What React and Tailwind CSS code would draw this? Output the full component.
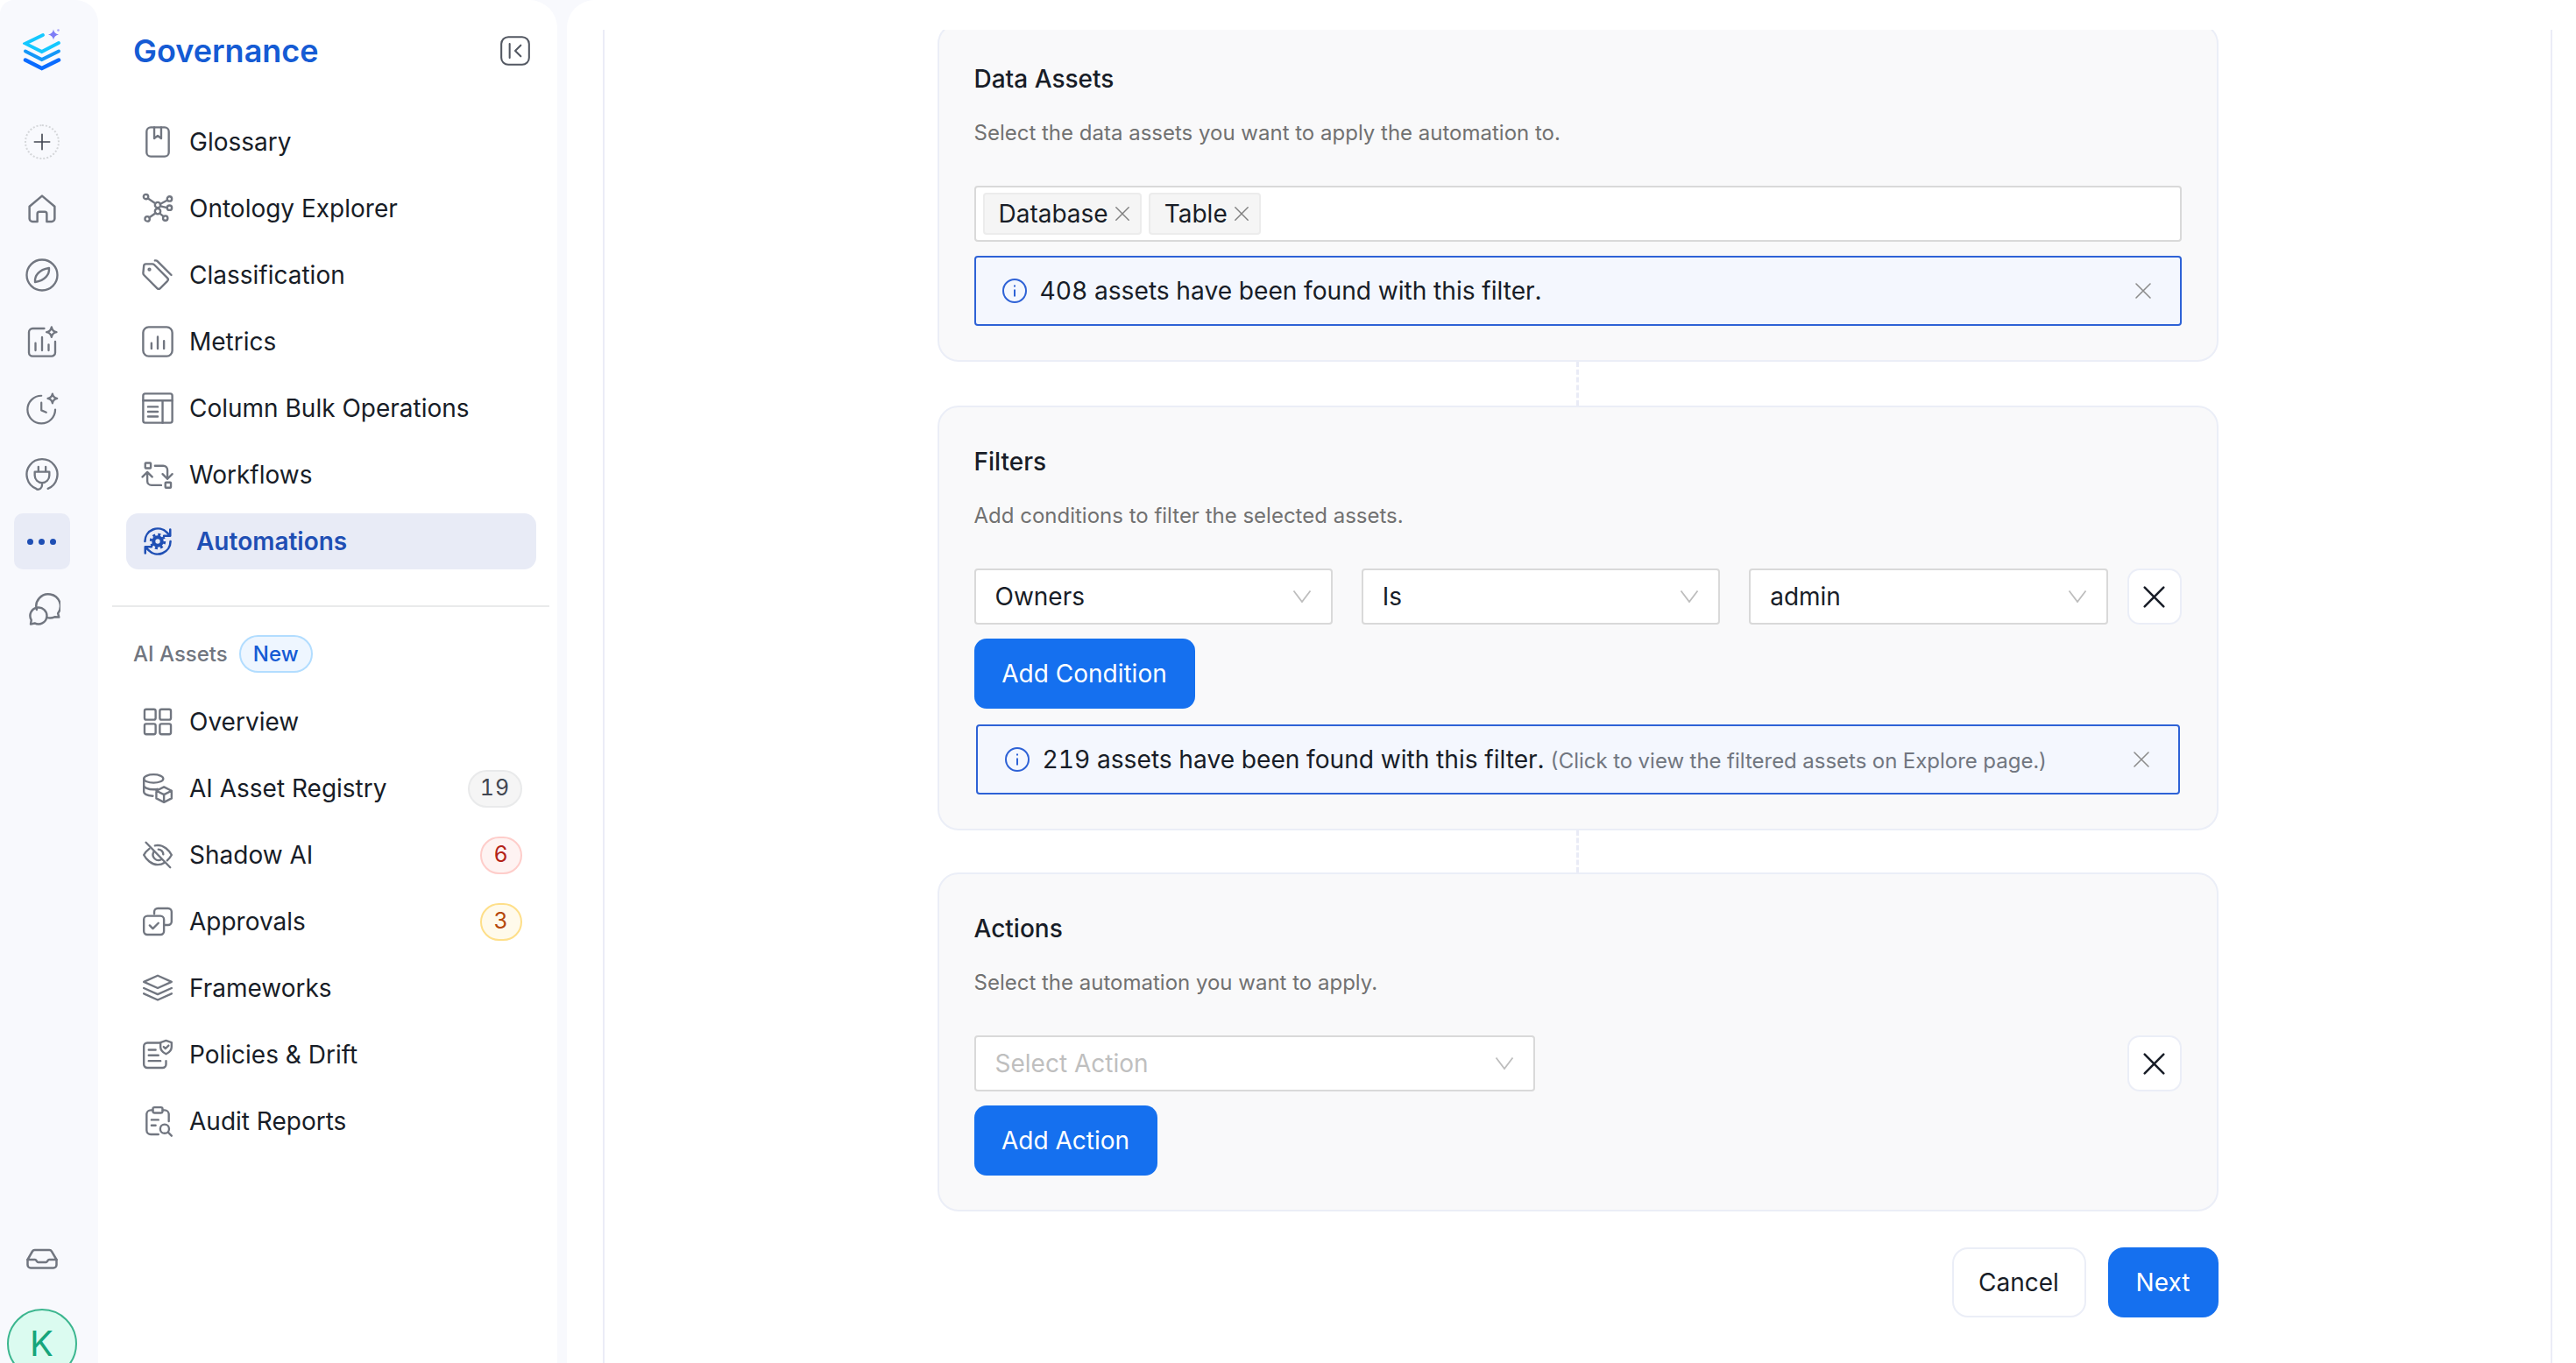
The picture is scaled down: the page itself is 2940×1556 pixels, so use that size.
import React from "react";

const Ico = ({ size = 36, color = "#717680", sw = 1.5, children, className = "" }) => (
  <svg width={size} height={size} viewBox="0 0 24 24" fill="none" stroke={color} strokeWidth={sw} strokeLinecap="round" strokeLinejoin="round" className={`shrink-0 ${className}`}>
    {children}
  </svg>
);

const Sparkle = ({ x, y, r = 3.4 }) => (
  <path d={`M${x} ${y - r}q.5 ${r - .5} ${r} ${r}q-${r - .5} .5 -${r} ${r}q-.5 -${r - .5} -${r} -${r}q${r - .5} -.5 ${r} -${r}z`} />
);

const railIcons = [
  <Ico key="h" size={46} sw={1.300}><path d="M4.500 10.800 12 4.500l7.500 6.300V18a1.800 1.800 0 0 1-1.800 1.800h-2.900v-4.600a1.200 1.200 0 0 0-1.200-1.200h-3.200a1.200 1.200 0 0 0-1.200 1.200v4.600H6.300A1.800 1.800 0 0 1 4.500 18Z" /></Ico>,
  <Ico key="c" size={40} sw={1.400}><circle cx="12" cy="12" r="10.500" /><path d="M16.800 7.200c.4 4.200-2.400 8.400-9.600 9.600-.4-4.200 2.400-8.400 9.600-9.600Z" /></Ico>,
  <Ico key="m" size={40} sw={1.400}><path d="M13.500 3H5.500A2.500 2.500 0 0 0 3 5.500v14A2.500 2.500 0 0 0 5.500 22h13a2.500 2.500 0 0 0 2.500-2.500V12" /><path d="M7.500 18v-5M12 18V9M16.500 18v-4" /><Sparkle x={18.500} y={5.500} /></Ico>,
  <Ico key="t" size={38} sw={1.400}><path d="M21.500 13a10 10 0 1 1-10-10" /><path d="M11.500 8v5.500l3.500 1.500" /><Sparkle x={19.500} y={5} /></Ico>,
  <Ico key="p" size={40} sw={1.400}><path d="M8 21.500a10.500 10.500 0 1 1 8 0" /><path d="M9.500 6.500v3.500M14.500 6.500v3.500M7 10h10v2.500a5 5 0 0 1-10 0ZM12 17.500v1.500a3 3 0 0 1-3.500 3" /></Ico>,
];

const sideIcons = {
  glossary: <><rect x="4" y="1.500" width="16" height="21" rx="3" /><path d="M9.500 1.500v8l2.500-2 2.500 2v-8" /></>,
  ontology: <><circle cx="3.500" cy="3.500" r="1.700" /><circle cx="20.500" cy="5" r="1.700" /><circle cx="20.500" cy="11.500" r="1.700" /><circle cx="4.500" cy="19.500" r="1.700" /><circle cx="17.500" cy="19" r="1.700" /><circle cx="12" cy="9.500" r="2" /><circle cx="12" cy="14" r="2" /><path d="M5 4.800 10.300 8.300M19 6 13.700 8.800M18.800 11.500 14 10.300M6 18.500 10.500 15.300M16.200 17.800 13.500 15.500" /></>,
  classification: <><path d="M2 5.500A1.500 1.500 0 0 1 3.500 4h4.600a2 2 0 0 1 1.400.6l9.500 9.500a1.600 1.600 0 0 1 0 2.200l-5.200 5.200a1.600 1.600 0 0 1-2.200 0l-9.500-9.500a2 2 0 0 1-.600-1.400Z" /><path d="M10 1.500h.5a2 2 0 0 1 1.400.6L21.800 12" /><circle cx="6" cy="8" r=".6" /></>,
  metrics: <><rect x="1.500" y="1.500" width="21" height="21" rx="4" /><path d="M7.500 17v-4M12 17V8.500M16.500 17v-5.500" /></>,
  column: <><rect x="1.500" y="1.500" width="21" height="21" rx="1.500" /><path d="M1.500 6.500h21M15.500 6.500v16M5 11h7M5 14.500h7M5 18h7" /></>,
  workflows: <><rect x="3" y="3.500" width="4" height="3.800" rx=".5" /><path d="M10 5.500h6a3 3 0 0 1 3 3v6.500M15.500 11.500l3.500 3.500 3.500-3.500" /><rect x="17.500" y="17.500" width="4" height="3.800" rx=".5" /><path d="M14.500 19.500h-7a3 3 0 0 1-3-3V10M1 13.500 4.500 10 8 13.500" /></>,
  overview: <><rect x="2.500" y="3" width="8" height="7.500" rx="1.200" /><rect x="13.500" y="3" width="8" height="7.500" rx="1.200" /><rect x="2.500" y="13.500" width="8" height="7.500" rx="1.200" /><rect x="13.500" y="13.500" width="8" height="7.500" rx="1.200" /></>,
  registry: <><ellipse cx="9" cy="5" rx="7" ry="3" /><path d="M2 5v9.500c0 1.500 2.700 2.700 6.500 3M2 9.800c0 1.600 3 3 7 3 1 0 2-.1 2.800-.3" /><path d="m16.500 11 5.500 2.700v5.500L16.500 22 11 19.200v-5.500ZM11 13.700l5.500 2.800 5.500-2.800M16.500 16.500V22" /></>,
  shadow: <><path d="M3.500 3 21 21" /><path d="M6 7.500C4 9 2.700 10.700 2 12c1.700 3.200 5.500 7 10 7 1.800 0 3.500-.5 5-1.500M10 5.300A10 10 0 0 1 12 5c4.500 0 8.300 3.800 10 7-.7 1.300-1.800 2.700-3.200 4" /><path d="M9 10a4 4 0 0 0 5.500 5.300M12.500 8a4 4 0 0 1 3.500 3.600" /></>,
  approvals: <><path d="M9.500 6.500V5a2.500 2.500 0 0 1 2.500-2.500h7.500A2.500 2.500 0 0 1 22 5v7a2.500 2.500 0 0 1-2.500 2.500h-3" /><rect x="2" y="8" width="14.500" height="13.500" rx="2.500" /><path d="m6.200 14.800 2.300 2.300 4-4" /></>,
  frameworks: <><path d="M12 3 22 7.500 12 12 2 7.500Z" /><path d="M2 12 12 16.500 22 12M2 16 12 20.500 22 16" /></>,
  policies: <><path d="M14 3.500H4.500A2.500 2.500 0 0 0 2 6v13a2.500 2.500 0 0 0 2.500 2.500h11A2.500 2.500 0 0 0 18 19v-2.500" /><path d="M5.500 8.500h5M5.500 12.500h7M5.500 16.500h8.500" /><path d="M18 1.800l4 1.400v3.300c0 2.500-1.800 4-4 5-2.200-1-4-2.500-4-5V3.200Z" /><path d="m16.300 6.400 1.300 1.200 2.200-2.200" /></>,
  audit: <><path d="M8.500 4H7a3 3 0 0 0-3 3v11.500a3 3 0 0 0 3 3h5.500M15.500 4H17a3 3 0 0 1 3 3v5" /><rect x="8.500" y="2" width="7" height="4" rx="1.200" /><path d="M7.500 11h5M7.500 15h3" /><circle cx="17" cy="17.500" r="3.200" /><path d="m19.500 20 2.500 2.500" /></>,
};

const govItems = [
  ["Glossary", "glossary"],
  ["Ontology Explorer", "ontology"],
  ["Classification", "classification"],
  ["Metrics", "metrics"],
  ["Column Bulk Operations", "column"],
  ["Workflows", "workflows"],
];

const aiItems = [
  ["Overview", "overview"],
  ["AI Asset Registry", "registry", "19", "w-[62px] bg-[#f5f5f5] border-[#e9eaeb] text-[#414651]"],
  ["Shadow AI", "shadow", "6", "w-[48px] bg-[#fef3f2] border-[#fecdca] text-[#b42318]"],
  ["Approvals", "approvals", "3", "w-[48px] bg-[#fffaeb] border-[#fedf89] text-[#b54708]"],
  ["Frameworks", "frameworks"],
  ["Policies & Drift", "policies"],
  ["Audit Reports", "audit"],
];

function NavRow({ label, icon, badge, badgeCls }) {
  return (
    <div className="flex items-center h-[64px] mb-[12px] pl-[17px] pr-[16px]">
      <Ico size={38}>{sideIcons[icon]}</Ico>
      <span className="ml-[17px] text-[28px] text-[#181d27]">{label}</span>
      {badge && (
        <span className={`ml-auto h-[43px] rounded-full border-2 flex items-center justify-center text-[25px] tabular-nums tracking-[1px] ${badgeCls}`}>{badge}</span>
      )}
    </div>
  );
}

function Logo() {
  return (
    <svg width="44" height="50" viewBox="25 34 44 50" fill="none" strokeLinecap="round" strokeLinejoin="miter">
      <path d="M48 41 28 50.700 46.700 60 66 50" stroke="#14c8ff" strokeWidth="3.800" />
      <path d="M28 59.500 46.700 69 66 59.500" stroke="#1597f8" strokeWidth="4" />
      <path d="M28 69.500 46.700 79 66 69.500" stroke="#0b6cff" strokeWidth="4.500" />
      <path d="M60 34.500q.9 5.200 6 6-5.100.8-6 6-.9-5.200-6-6 5.100-.8 6-6Z" fill="#7d7cf6" />
      <circle cx="65.500" cy="35.500" r="1.300" fill="#a9a6f8" />
    </svg>
  );
}

function IconRail() {
  return (
    <aside className="w-[112px] shrink-0 h-full bg-[#f8f9fd] rounded-tl-[16px] rounded-tr-[26px] pr-[17px] flex flex-col items-center overflow-hidden">
      <div className="h-[124px] pt-[33px] shrink-0"><Logo /></div>
      <div className="h-[76px] flex items-center justify-center">
        <div className="w-[40px] h-[40px] rounded-full border-2 border-dotted border-[#d5d7da] flex items-center justify-center">
          <Ico size={26} color="#414651"><path d="M12 4v16M4 12h16" /></Ico>
        </div>
      </div>
      {railIcons.map((ic, i) => (
        <div key={i} className="h-[76px] flex items-center justify-center">{ic}</div>
      ))}
      <div className="h-[64px] w-[64px] my-[6px] shrink-0 rounded-[10px] bg-[#e8ebf6] flex items-center justify-center gap-[6px]">
        <span className="w-[7px] h-[7px] rounded-full bg-[#1f4fb4]" />
        <span className="w-[7px] h-[7px] rounded-full bg-[#1f4fb4]" />
        <span className="w-[7px] h-[7px] rounded-full bg-[#1f4fb4]" />
      </div>
      <div className="h-[76px] flex items-center justify-center">
        <svg width="38" height="38" viewBox="0 0 40 40" fill="none" stroke="#717680" strokeWidth="2.600" strokeLinejoin="round" strokeLinecap="round" className="mt-[2px] ml-[4px]">
          <path d="M11.500 21A14.500 14.500 0 1 1 37 25.500l1.200 4.500-5.200-.2a14 14 0 0 1-9.500.6" />
          <path d="M4.200 38.500 5 33.500A10 10 0 1 1 9 37.300Z" />
        </svg>
      </div>
      <div className="mt-auto mb-[45px]">
        <svg width="36" height="24" viewBox="0 0 36 24" fill="none" stroke="#717680" strokeWidth="2.500" strokeLinejoin="round" strokeLinecap="round">
          <path d="M1.500 13 7 3.500A3 3 0 0 1 9.600 2h16.800A3 3 0 0 1 29 3.500L34.500 13v6a3.500 3.500 0 0 1-3.500 3.500H5A3.500 3.500 0 0 1 1.500 19Z" />
          <path d="M1.500 13H10c1.500 0 2 3 3.500 3h9c1.500 0 2-3 3.500-3h8.500" />
        </svg>
      </div>
      <div className="w-[80px] h-[80px] shrink-0 -mb-[18px] rounded-full bg-[#dbfbf0] border-2 border-[#3cb68f] flex items-center justify-center text-[40px] text-[#17a57b]">K</div>
    </aside>
  );
}

function SidePanel() {
  return (
    <nav className="w-[524px] shrink-0 h-full bg-white rounded-tr-[32px]">
      <div className="h-[116px] pl-[40px] pr-[29px] flex items-center justify-between">
        <span className="text-[36px] font-semibold text-[#155bd4]">Governance</span>
        <Ico size={38} sw={1.300} color="#535862"><rect x="2" y="2" width="20" height="20" rx="5" /><path d="M8 7v10M16 8l-4 4 4 4" /></Ico>
      </div>
      <div className="pt-[14px] pl-[32px] pr-[24px]">
        {govItems.map(([label, icon]) => <NavRow key={label} label={label} icon={icon} />)}
        <div className="flex items-center h-[64px] pl-[17px] rounded-[14px] bg-[#e8ebf6]">
          <Ico size={38} color="#1f4fb4" sw={1.600}>
            <path d="M2.800 12a9.200 9.200 0 0 1 15.800-6.400L21 8M21 3.500V8h-4.500M21.200 12a9.200 9.200 0 0 1-15.800 6.400L3 16M3 20.500V16h4.500" />
            <circle cx="12" cy="12" r="4.300" fill="#1f4fb4" stroke="none" />
            <circle cx="12" cy="12" r="4.900" strokeWidth="1.800" strokeDasharray="1.900 1.950" strokeLinecap="butt" />
            <circle cx="12" cy="12" r="1.700" fill="#e8ebf6" stroke="none" />
          </Ico>
          <span className="ml-[25px] text-[28px] font-semibold text-[#1f4fb4]">Automations</span>
        </div>
      </div>
      <div className="h-[2px] bg-[#e9eaeb] ml-[16px] mr-[9px] mt-[41px]" />
      <div className="pl-[40px] mt-[32px] h-[43px] flex items-center gap-[13px]">
        <span className="text-[24px] font-medium text-[#717680]">AI Assets</span>
        <span className="h-[43px] w-[84px] rounded-full bg-[#eef6ff] border-2 border-[#b2ddff] flex items-center justify-center text-[24px] font-medium text-[#155bd4]">New</span>
      </div>
      <div className="mt-[24px] pl-[32px] pr-[24px]">
        {aiItems.map(([label, icon, badge, cls]) => <NavRow key={label} label={label} icon={icon} badge={badge} badgeCls={cls} />)}
      </div>
    </nav>
  );
}

const Chevron = () => (
  <svg width="22" height="16" viewBox="0 0 22 16" fill="none" stroke="#bdbdbd" strokeWidth="1.800" className="shrink-0"><path d="M1.500 1.500 11 14l9.500-12.500" /></svg>
);

const Cross = ({ size = 20, color = "#8c8c8c", sw = 1.600 }) => (
  <svg width={size} height={size} viewBox="0 0 20 20" fill="none" stroke={color} strokeWidth={sw} strokeLinecap="round" className="shrink-0"><path d="M2 2l16 16M18 2 2 18" /></svg>
);

const InfoIcon = () => (
  <svg width="30" height="30" viewBox="0 0 30 30" fill="none" stroke="#2e62d6" strokeWidth="2" className="shrink-0">
    <circle cx="15" cy="15" r="13" /><path d="M15 13.500v8M15 8.500v2" />
  </svg>
);

function Select({ value, placeholder, className = "" }) {
  return (
    <div className={`h-[64px] bg-white border-2 border-[#d9d9d9] rounded-[4px] pl-[22px] pr-[22px] flex items-center justify-between ${className}`}>
      <span className={`text-[28px] ${placeholder ? "text-[#bfbfbf]" : "text-[#181d27]"}`}>{value || placeholder}</span>
      <Chevron />
    </div>
  );
}

const RemoveBtn = () => (
  <button className="w-[62px] h-[64px] shrink-0 bg-white border-2 border-[#ebeef7] rounded-[14px] flex items-center justify-center">
    <Cross size={27} color="#181d27" sw={1.900} />
  </button>
);

const PrimaryBtn = ({ children, className = "" }) => (
  <button className={`h-[80px] bg-[#1570ef] text-white text-[28px] rounded-[14px] flex items-center justify-center ${className}`}>{children}</button>
);

function Alert({ children, className = "", iconCls = "ml-[29px]" }) {
  return (
    <div className={`h-[80px] bg-[#f4f7fe] border-2 border-[#2e62d6] rounded-[4px] flex items-center ${className}`}>
      <div className={iconCls}><InfoIcon /></div>
      <div className="ml-[14px] flex items-baseline gap-[7px] text-[28.200px] tabular-nums text-[#181d27]">{children}</div>
      <div className="ml-auto mr-[32px]"><Cross /></div>
    </div>
  );
}

function Tag({ label, className = "" }) {
  return (
    <span className={`h-[48px] bg-[#f5f5f5] border-2 border-[#ececec] rounded-[4px] flex items-center pl-[16px] pr-[11px] gap-[7px] text-[28px] text-[#181d27] ${className}`}>
      {label}<Cross size={18} color="#808080" />
    </span>
  );
}

function Card({ title, desc, children }) {
  return (
    <section className="bg-[#f9f9fa] border-2 border-[#ebeef7] rounded-[24px] px-[40px] pt-[44px] pb-[39px]">
      <h3 className="text-[28px] leading-[36px] font-medium text-[#181d27]">{title}</h3>
      <p className="mt-[26px] mb-[42px] text-[24px] leading-[36px] text-[#717171]">{desc}</p>
      {children}
    </section>
  );
}

const Connector = ({ h = "h-[50px]" }) => (
  <div className={`${h} w-0 mx-auto border-l-[3px] border-dashed border-[#e9ebf6]`} />
);

export default function App() {
  return (
    <div className="h-screen w-full overflow-hidden flex bg-white font-['Inter',sans-serif]">
      <IconRail />
      <div className="flex-1 min-w-0 h-full flex gap-[11px] bg-[#f8f9fd]">
        <SidePanel />
        <main className="flex-1 min-w-0 h-full bg-white rounded-tl-[32px] pt-[34px] pl-[41px] pr-[27px]">
          <div className="h-full border-x-2 border-[#ebecf7] overflow-hidden flex flex-col items-center">
            <div className="w-[1462px] shrink-0 -mt-[8px]">
              <Card title="Data Assets" desc="Select the data assets you want to apply the automation to.">
                <div className="h-[64px] bg-white border-2 border-[#d9d9d9] rounded-[4px] flex items-center pl-[8px] gap-[8px]">
                  <Tag label="Database" />
                  <Tag label="Table" />
                </div>
                <Alert className="mt-[16px]">408 assets have been found with this filter.</Alert>
              </Card>
              <Connector />
              <Card title="Filters" desc="Add conditions to filter the selected assets.">
                <div className="flex gap-[22px]">
                  <div className="flex-1 grid grid-cols-3 gap-[33px]">
                    <Select value="Owners" />
                    <Select value="Is" />
                    <Select value="admin" />
                  </div>
                  <RemoveBtn />
                </div>
                <PrimaryBtn className="w-[252px] mt-[16px] rounded-[8px]">Add Condition</PrimaryBtn>
                <Alert className="mt-[18px] mx-[2px]" iconCls="ml-[30px]">
                  219 assets have been found with this filter.
                  <span className="text-[24px] text-[#717680]">(Click to view the filtered assets on Explore page.)</span>
                </Alert>
              </Card>
              <Connector h="h-[48px]" />
              <Card title="Actions" desc="Select the automation you want to apply.">
                <div className="flex justify-between">
                  <Select placeholder="Select Action" className="w-[640px]" />
                  <RemoveBtn />
                </div>
                <PrimaryBtn className="w-[209px] mt-[16px]">Add Action</PrimaryBtn>
              </Card>
              <div className="mt-[41px] flex justify-end gap-[25px]">
                <button className="h-[80px] w-[153px] bg-white border-2 border-[#ebeef7] rounded-[18px] text-[28px] text-[#181d27]">Cancel</button>
                <PrimaryBtn className="w-[126px] rounded-[18px]">Next</PrimaryBtn>
              </div>
            </div>
          </div>
        </main>
      </div>
    </div>
  );
}
